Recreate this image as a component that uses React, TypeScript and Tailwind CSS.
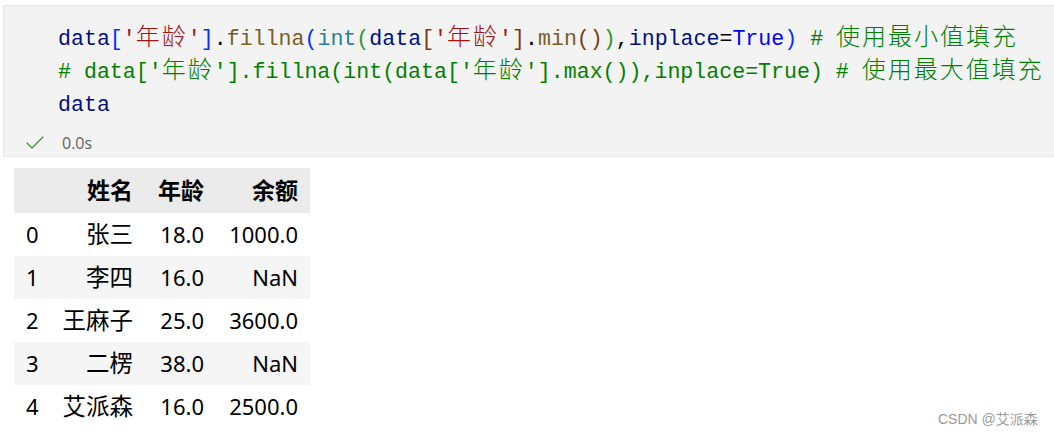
import React from "react";
import { Check } from "lucide-react";

const mono = "font-['Liberation_Mono','Noto_Sans_CJK_SC',monospace]";

// wide CJK glyphs inside the monospace code
function Cj({ children }: { children: React.ReactNode }) {
  return (
    <span className="font-['Noto_Sans_CJK_SC',sans-serif] text-[24px] font-light leading-none tracking-[2px]">
      {children}
    </span>
  );
}

const rows = [
  { idx: "0", name: "张三", age: "18.0", bal: "1000.0" },
  { idx: "1", name: "李四", age: "16.0", bal: "NaN" },
  { idx: "2", name: "王麻子", age: "25.0", bal: "3600.0" },
  { idx: "3", name: "二楞", age: "38.0", bal: "NaN" },
  { idx: "4", name: "艾派森", age: "16.0", bal: "2500.0" },
];

export default function App() {
  return (
    <div className="relative h-[436px] w-[1054px] overflow-hidden bg-white">
      <div className="ml-[3px] mt-[5px] w-[1070px] border border-r-0 border-[#e5e5e5] bg-[#f3f3f3]">
        <div className={`${mono} pl-[54px] pt-[17px] text-[21.6px] leading-[33px] whitespace-pre`}>
          <div>
            <span className="text-[#001080]">data</span>
            <span className="text-[#0431fa]">[</span>
            <span className="text-[#a31515]">'<Cj>年龄</Cj>'</span>
            <span className="text-[#0431fa]">]</span>
            <span className="text-black">.</span>
            <span className="text-[#795e26]">fillna</span>
            <span className="text-[#0431fa]">(</span>
            <span className="text-[#267f99]">int</span>
            <span className="text-[#319331]">(</span>
            <span className="text-[#001080]">data</span>
            <span className="text-[#7b3814]">[</span>
            <span className="text-[#a31515]">'<Cj>年龄</Cj>'</span>
            <span className="text-[#7b3814]">]</span>
            <span className="text-black">.</span>
            <span className="text-[#795e26]">min</span>
            <span className="text-[#7b3814]">()</span>
            <span className="text-[#319331]">)</span>
            <span className="text-black">,</span>
            <span className="text-[#001080]">inplace</span>
            <span className="text-black">=</span>
            <span className="text-[#0000ff]">True</span>
            <span className="text-[#0431fa]">)</span>
            <span> </span>
            <span className="text-[#008000]">
              # <Cj>使用最小值填充</Cj>
            </span>
          </div>
          <div className="text-[#008000]">
            # data['<Cj>年龄</Cj>'].fillna(int(data['<Cj>年龄</Cj>'].max()),inplace=True) # <Cj>使用最大值填充</Cj>
          </div>
          <div className="text-[#001080]">data</div>
        </div>
        <div className="flex h-[34px] items-start pl-[19px] pt-[10px]">
          <Check className="-mt-[1px] h-[24px] w-[24px] shrink-0 text-[#388a34]" strokeWidth={1.1} />
          <span className="ml-[15px] font-['Open_Sans',sans-serif] text-[16px] leading-[22px] text-[#616161]">0.0s</span>
        </div>
      </div>

      <div className="ml-[14px] mt-[11px] w-[296px] font-['Noto_Sans','Noto_Sans_CJK_SC',sans-serif] text-[22px] text-black">
        <div className="grid h-[45px] grid-cols-[36px_95px_71px_94px] items-center bg-[#ebebeb] font-bold">
          <div />
          <div className="px-3 text-right text-[23px]">姓名</div>
          <div className="px-3 text-right text-[23px]">年龄</div>
          <div className="px-3 text-right text-[23px]">余额</div>
        </div>
        {rows.map((r, i) => (
          <div
            key={r.idx}
            className={`grid h-[43px] grid-cols-[36px_95px_71px_94px] items-center ${i % 2 === 1 ? "bg-[#f5f5f5]" : "bg-white"}`}
          >
            <div className="pl-3">{r.idx}</div>
            <div className="px-3 text-right text-[23.5px]">{r.name}</div>
            <div className="px-3 text-right">{r.age}</div>
            <div className="px-3 text-right">{r.bal}</div>
          </div>
        ))}
      </div>

      <div className="absolute left-[938px] top-[409px] font-['Liberation_Sans','Noto_Sans_CJK_SC',sans-serif] text-[14px] text-[#9a9a9a]">
        CSDN @艾派森
      </div>
    </div>
  );
}
